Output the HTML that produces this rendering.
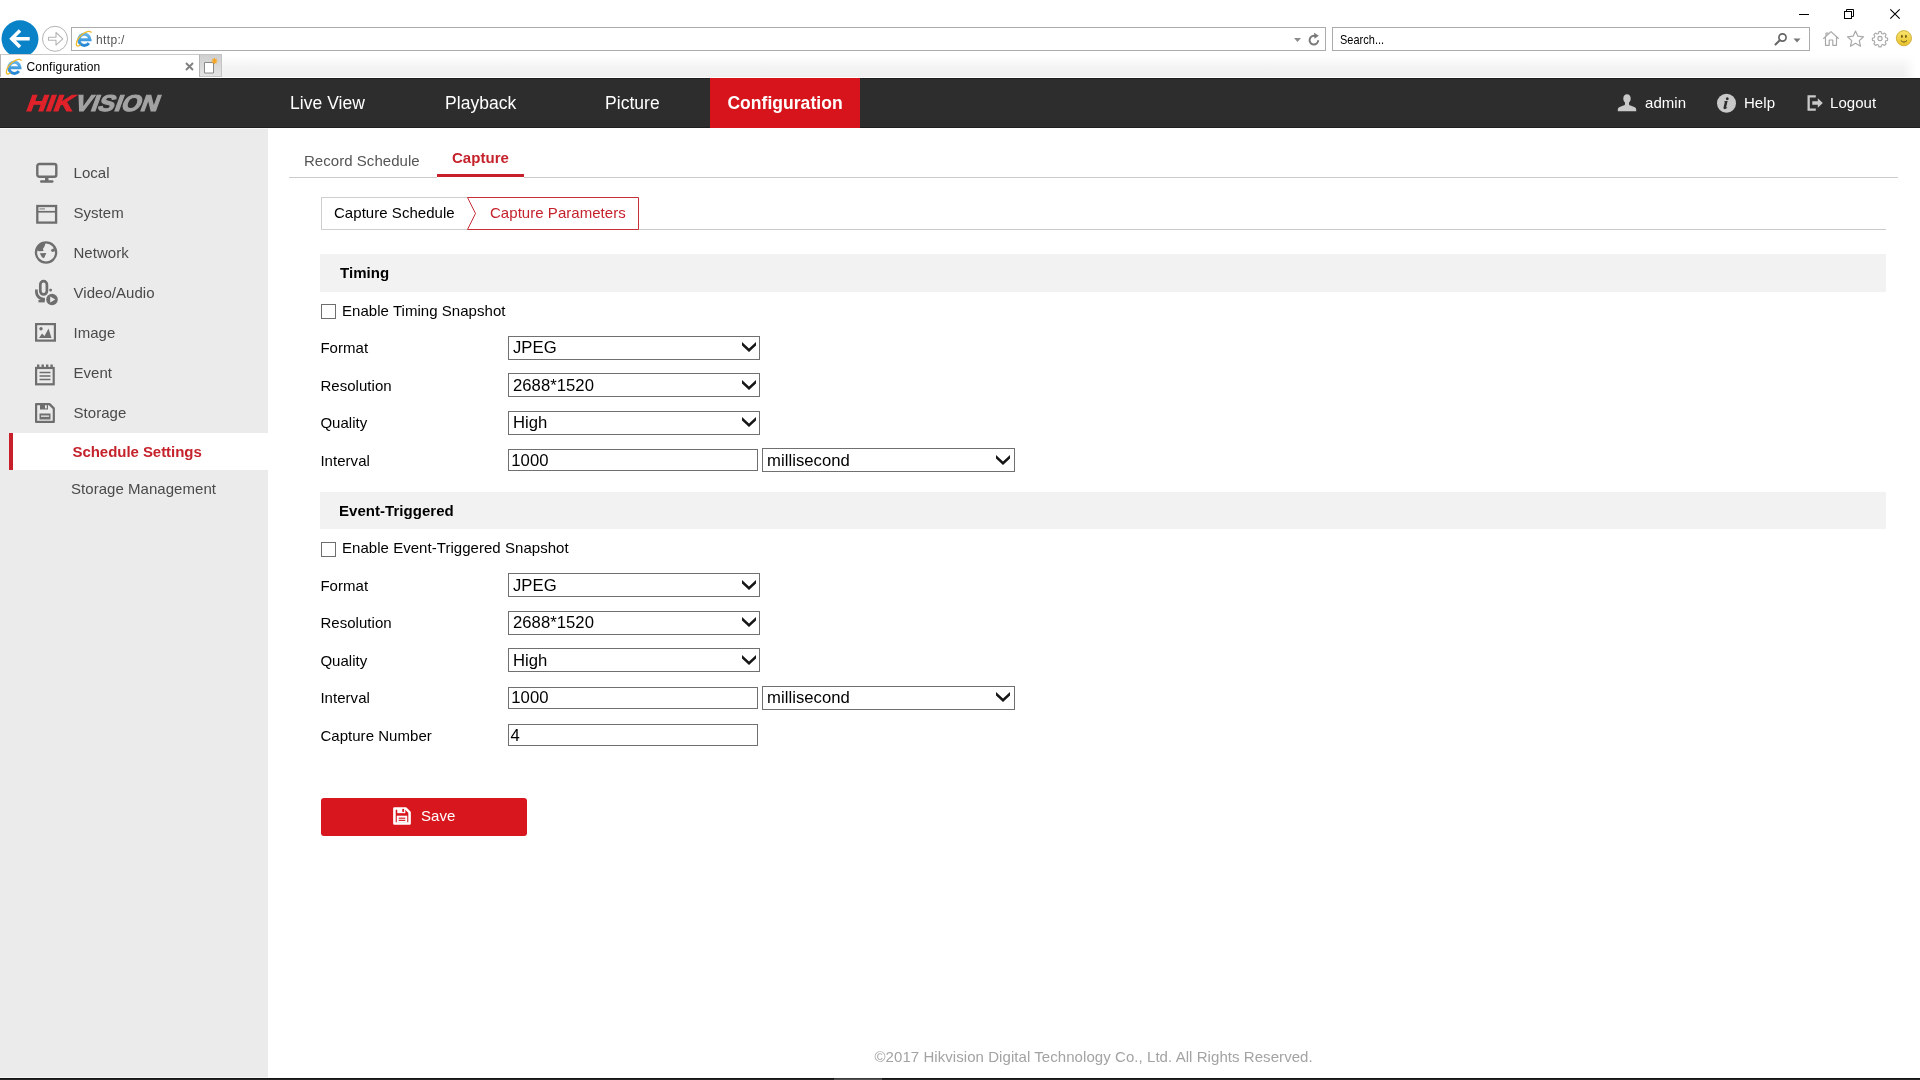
<!DOCTYPE html>
<html><head><meta charset="utf-8"><title>Configuration</title>
<style>
*{box-sizing:border-box;margin:0;padding:0}
html,body{width:1920px;height:1080px;overflow:hidden;background:#fff;font-family:"Liberation Sans",sans-serif;letter-spacing:.040px}
.abs{position:absolute}
#chrome{position:absolute;left:0;top:0;width:1920px;height:78px;background:#fff}
#tabrow{position:absolute;left:0;top:54px;width:1920px;height:23px;background:linear-gradient(to right,rgba(255,255,255,0) 0,rgba(255,255,255,0) 1903px,#fff 1916px),linear-gradient(#ffffff 0%,#fdfdfd 15%,#f4f4f4 55%,#efefef 100%)}
#tab{position:absolute;left:0;top:54px;width:200px;height:23px;background:#fff;border-left:1px solid #b5b5b5;border-right:1px solid #b5b5b5;border-top:1px solid #c9c9c9}
#newtab{position:absolute;left:200px;top:54px;width:22px;height:23px;background:linear-gradient(#cfcfcf,#e3e3e3);border:1px solid #c4c4c4;border-left:none}
.ui{font-family:"Liberation Sans",sans-serif;font-size:11.5px;color:#000;white-space:nowrap}
#addr{position:absolute;left:71px;top:27px;width:1255px;height:24px;border:1px solid #ababab;background:#fff}
#search{position:absolute;left:1332px;top:27px;width:478px;height:24px;border:1px solid #ababab;background:#fff}
#hdr{position:absolute;left:0;top:78px;width:1920px;height:50px;background:#2d2d2d;box-shadow:inset 0 1px 0 #1e1e1e,inset 0 -1px 0 #1f1f1f}
.nav{position:absolute;top:0;height:50px;line-height:50px;color:#fff;font-size:17.5px;white-space:nowrap}
#navcfg{position:absolute;left:710px;top:0;width:150px;height:50px;background:#d7141c;color:#fff;font-weight:bold;font-size:17.5px;line-height:50px;text-align:center}
.hr{position:absolute;color:#fff;font-size:15px;line-height:50px;top:0;white-space:nowrap}
#side{position:absolute;left:0;top:128px;width:268px;height:949px;background:#ebebeb;box-shadow:inset 0 1px 0 #f8f8f8}
.mi{position:absolute;left:73.500px;font-size:15px;color:#4a4a4a;white-space:nowrap;line-height:20px}
.ico{position:absolute}
#main{position:absolute;left:268px;top:128px;width:1652px;height:950px;background:#fff}
.lbl{position:absolute;left:320.400px;font-size:15px;color:#000;line-height:20px;white-space:nowrap}
.sel{position:absolute;height:24px;border:1px solid #707070;background:#fff;font-size:16.67px;line-height:21px;padding-left:4px;color:#000;white-space:nowrap}

.inp{position:absolute;width:250px;height:22px;border:1px solid #707070;background:#fff;font-size:16.67px;line-height:20px;padding-left:2.300px;color:#000}
.sec{position:absolute;left:320px;width:1566px;background:#f2f2f2;font-weight:bold;font-size:15px;color:#000;padding-left:20px}
.cb{position:absolute;left:321px;width:15px;height:15px;border:1px solid #6e6e6e;background:#fff}
</style></head><body>
<div id="root" style="position:absolute;left:0;top:0;width:1920px;height:1080px;will-change:transform">
<div id="chrome">
  <!-- window controls -->
  <svg class="abs" style="left:1790px;top:0" width="130" height="27" viewBox="0 0 130 27">
    <rect x="9" y="14" width="10" height="1" fill="#000"/>
    <g fill="none" stroke="#000" stroke-width="1">
      <rect x="54.5" y="11.5" width="7" height="7"/>
      <path d="M56.5 11.5V9.5H63.5V16.5H61.5"/>
    </g>
    <path d="M100.3 9.3L109.7 18.7M109.7 9.3L100.3 18.7" stroke="#000" stroke-width="1.1" fill="none"/>
  </svg>
  <div id="tabrow"></div>
  <!-- address bar -->
  <div id="addr">
    <svg class="abs" style="left:3px;top:2px" width="18" height="18" viewBox="0 0 18 18">
      <defs><linearGradient id="ieg" x1="0" y1="0" x2="0" y2="1"><stop offset="0" stop-color="#63b4ea"/><stop offset="1" stop-color="#2488d4"/></linearGradient></defs>
      <path d="M4.300 9.700H15A5.600 5.600 0 1 0 13.900 13.200" fill="none" stroke="url(#ieg)" stroke-width="3.100"/>
      <path d="M5.500 14.800C3.500 16.600 1.600 16.400 1.400 14.600C1 11 5 4.500 10.500 2.300C13.500 1.100 15.800 1.200 16.500 2.600" fill="none" stroke="#f0b929" stroke-width="1.300"/>
    </svg>
    <div class="ui abs" style="left:24px;top:5px;color:#555;font-size:12px;line-height:15px;letter-spacing:.350px">http:/</div>
    <svg class="abs" style="left:1221px;top:9px" width="10" height="6" viewBox="0 0 10 6"><path d="M1 1h7l-3.500 4z" fill="#8c8c8c"/></svg>
    <svg class="abs" style="left:1235px;top:4px" width="14" height="15" viewBox="0 0 14 15"><path d="M11.200 8.200A4.300 4.300 0 1 1 8.800 4.300" fill="none" stroke="#7a7a7a" stroke-width="2"/><path d="M7 .800l4.800 3-4.300 3z" fill="#7a7a7a"/></svg>
  </div>
  <div id="search">
    <div class="ui abs" style="left:7px;top:5px;color:#000;font-size:12.600px;line-height:15px;transform:scaleX(.870);transform-origin:0 0">Search...</div>
    <svg class="abs" style="left:440px;top:4px" width="16" height="15" viewBox="0 0 16 15"><circle cx="9.500" cy="5.500" r="3.600" fill="none" stroke="#666" stroke-width="1.700"/><path d="M6.800 8.200L2.500 12.500" stroke="#666" stroke-width="2" stroke-linecap="round"/></svg>
    <svg class="abs" style="left:460px;top:9.500px" width="9" height="6" viewBox="0 0 9 6"><path d="M0.500 .500h7l-3.500 4z" fill="#777"/></svg>
  </div>
  <!-- back / forward -->
  <svg class="abs" style="left:0;top:18px" width="70" height="38" viewBox="0 0 70 38">
    <circle cx="20" cy="20.800" r="18.500" fill="#0a82c8"/>
    <path d="M29.700 20.800H12.500M20 12.500L11.700 20.800l8.300 8.300" fill="none" stroke="#fff" stroke-width="3.500" stroke-linejoin="miter"/>
    <circle cx="55" cy="20.800" r="12.500" fill="#fff" stroke="#b4b4b4" stroke-width="1"/>
    <path d="M48.500 19.300h7.500v-4.800l6.800 6.300-6.800 6.300v-4.800h-7.500z" fill="#fff" stroke="#b4b4b4" stroke-width="1.100" stroke-linejoin="round"/>
  </svg>
  <!-- right icons -->
  <svg class="abs" style="left:1820px;top:28px" width="100" height="22" viewBox="0 0 100 22">
    <g fill="none" stroke="#a8a8a8" stroke-width="1.200" stroke-linejoin="round">
      <path d="M3.300 10.800L11 3.600l7.700 7.200M5.500 9.300v8h3.700v-5.300h3.600v5.300h3.700v-8M6 8.300V5h2v1.500"/>
      <path d="M35.500 3l2.400 5.200 5.600.6-4.200 3.800 1.200 5.600-5-2.900-5 2.900 1.200-5.600-4.200-3.800 5.600-.6z"/>
      <g transform="translate(60 10.500) scale(.920) translate(-60 -10.500)"><circle cx="60" cy="10.500" r="2.300"/>
      <path d="M58.800 3h2.400l.5 2 1.500.6 1.800-1 1.700 1.700-1 1.800.6 1.500 2 .5v2.400l-2 .5-.6 1.500 1 1.800-1.700 1.700-1.800-1-1.500.6-.5 2h-2.400l-.5-2-1.500-.6-1.800 1-1.700-1.700 1-1.800-.6-1.500-2-.5v-2.400l2-.5.6-1.500-1-1.800 1.700-1.700 1.800 1 1.500-.6z"/>
    </g></g>
    <defs><linearGradient id="smg" x1="0" y1="0" x2="0" y2="1"><stop offset="0" stop-color="#f8e46c"/><stop offset="1" stop-color="#e9c22e"/></linearGradient></defs>
    <circle cx="83.900" cy="10.200" r="7.600" fill="url(#smg)" stroke="#c9a52b" stroke-width=".800"/>
    <ellipse cx="81.900" cy="8.300" rx=".850" ry="1.600" fill="#6a5208"/><ellipse cx="85.900" cy="8.300" rx=".850" ry="1.600" fill="#6a5208"/>
    <path d="M80.800 12.500Q83.900 15.700 87 12.500" fill="none" stroke="#6a5208" stroke-width="1"/>
  </svg>
  <!-- tab -->
  <div id="tab">
    <svg class="abs" style="left:4px;top:3px" width="18" height="18" viewBox="0 0 18 18">
      <defs><linearGradient id="ieg" x1="0" y1="0" x2="0" y2="1"><stop offset="0" stop-color="#63b4ea"/><stop offset="1" stop-color="#2488d4"/></linearGradient></defs>
      <path d="M4.300 9.700H15A5.600 5.600 0 1 0 13.900 13.200" fill="none" stroke="url(#ieg)" stroke-width="3.100"/>
      <path d="M5.500 14.800C3.500 16.600 1.600 16.400 1.400 14.600C1 11 5 4.500 10.500 2.300C13.500 1.100 15.800 1.200 16.500 2.600" fill="none" stroke="#f0b929" stroke-width="1.300"/>
    </svg>
    <div class="ui abs" style="left:25.500px;top:5px;font-size:12px;line-height:15px;letter-spacing:.200px">Configuration</div>
    <svg class="abs" style="left:183.500px;top:6.500px" width="9" height="9" viewBox="0 0 9 9"><path d="M1 1l7 7M8 1L1 8" stroke="#808080" stroke-width="1.900"/></svg>
  </div>
  <div id="newtab">
    <svg class="abs" style="left:3px;top:2px" width="16" height="18" viewBox="0 0 16 18"><path d="M1.500 5.500h9v10.500h-9z" fill="#fff" stroke="#8a8a8a" stroke-width="1"/><path d="M11.500 1v6M8.500 4h6M9.400 1.900l4.200 4.200M13.600 1.900L9.400 6.100" stroke="#f5a623" stroke-width="1.100"/></svg>
  </div>
</div>
<div id="hdr">
  <svg class="abs" style="left:20px;top:10px" width="150" height="30" viewBox="0 0 150 30">
    <g transform="translate(4.200,23.300) skewX(-20)" style="font:bold 23px 'Liberation Sans',sans-serif" stroke-width="1.100" stroke-linejoin="miter">
      <text x="1" y="0" fill="#e0222a" stroke="#e0222a" textLength="46.500" lengthAdjust="spacingAndGlyphs">HIK</text>
      <text x="49" y="0" fill="#a3a3a3" stroke="#a3a3a3" textLength="84" lengthAdjust="spacingAndGlyphs">VISION</text>
    </g>
  </svg>
  <div class="nav" style="left:290px">Live View</div>
  <div class="nav" style="left:445px">Playback</div>
  <div class="nav" style="left:605px">Picture</div>
  <div id="navcfg">Configuration</div>
  <!-- user -->
  <svg class="abs" style="left:1616px;top:15px" width="22" height="20" viewBox="0 0 22 20">
    <path d="M11 1.200c2.300 0 3.700 1.700 3.700 4.300 0 1.800-.7 3.300-1.700 4.100v1.300c0 .8.500 1.300 1.600 1.700l3.700 1.300c1.300.5 1.900 1.300 1.900 2.500v1.800H1.800v-1.800c0-1.200.6-2 1.900-2.500l3.700-1.300c1.100-.4 1.600-.9 1.600-1.700V9.600c-1-.8-1.700-2.300-1.700-4.100 0-2.600 1.400-4.300 3.700-4.300z" fill="#c9c9c9"/>
  </svg>
  <div class="hr" style="left:1645px">admin</div>
  <svg class="abs" style="left:1716px;top:15px" width="21" height="21" viewBox="0 0 21 21">
    <circle cx="10.500" cy="10.300" r="9.500" fill="#c9c9c9"/>
    <path d="M11.300 4.300a1.400 1.400 0 1 1-.01 0zM8.300 8.200l3.400-.5-1.500 6.300c-.1.600.2.700.9.300l.2.500c-1.200 1.100-2.300 1.500-3 1.300-.7-.2-.9-.9-.7-1.800l1.100-4.800c.1-.5 0-.7-.6-.8z" fill="#2d2d2d"/>
  </svg>
  <div class="hr" style="left:1744px">Help</div>
  <svg class="abs" style="left:1806px;top:16px" width="18" height="18" viewBox="0 0 18 18">
    <path d="M1.500 1.200h8.300v2.300H3.800v11h6v2.300H1.500z" fill="#c9c9c9"/>
    <path d="M6.300 7.300h5.500V4.200l5 4.800-5 4.800v-3.100H6.300z" fill="#c9c9c9"/>
  </svg>
  <div class="hr" style="left:1830px">Logout</div>
</div>
<div id="side">
  <!-- Local: monitor (y offset: page y - 128) -->
  <svg class="ico" style="left:35px;top:34px" width="24" height="22" viewBox="0 0 24 22">
    <rect x="2.300" y="2" width="19" height="12.800" rx="2" fill="none" stroke="#6e6e6e" stroke-width="2.400"/>
    <rect x="10" y="15" width="3.500" height="4" fill="#6e6e6e"/>
    <rect x="5" y="18.300" width="13.500" height="2.500" rx="1.200" fill="#6e6e6e"/>
  </svg>
  <div class="mi" style="top:35px">Local</div>
  <!-- System: window -->
  <svg class="ico" style="left:35px;top:76px" width="24" height="20" viewBox="0 0 24 20">
    <rect x="2.300" y="2" width="18.800" height="16.600" fill="none" stroke="#6e6e6e" stroke-width="2.300"/>
    <rect x="2.300" y="6.900" width="18.800" height="1.700" fill="#6e6e6e"/>
    <rect x="4.500" y="4.300" width="5.500" height="1.200" fill="#8a8a8a"/>
  </svg>
  <div class="mi" style="top:75px">System</div>
  <!-- Network: globe -->
  <svg class="ico" style="left:34px;top:113px" width="24" height="24" viewBox="0 0 24 24">
    <circle cx="12.050" cy="11.500" r="10.100" fill="#ebebeb" stroke="#6e6e6e" stroke-width="2.300"/>
    <path d="M3 7.900L4.400 3.900L7.900 1.600L11.600 1.500L10.700 5.100L8.900 7.900L9.600 10L5.800 10.300L3.700 10z" fill="#6e6e6e"/>
    <path d="M5.800 12.300L12.300 12.100L10 17.200L7.900 16.300z" fill="#6e6e6e"/>
    <path d="M16.700 8.900L20.300 7L21 10.300L18 11.100z" fill="#6e6e6e"/>
  </svg>
  <div class="mi" style="top:115px">Network</div>
  <!-- Video/Audio: mic + play -->
  <svg class="ico" style="left:34px;top:151px" width="26" height="28" viewBox="0 0 26 28">
    <rect x="6.300" y="2.200" width="6.600" height="13.200" rx="3.300" fill="none" stroke="#6e6e6e" stroke-width="2.700"/>
    <path d="M2.400 10.500v2.300a7.300 7.300 0 0 0 8.500 7.200" fill="none" stroke="#6e6e6e" stroke-width="2.700"/>
    <rect x="4.500" y="20.800" width="6.200" height="2.600" fill="#6e6e6e"/>
    <rect x="8.500" y="19.500" width="2" height="2.500" fill="#6e6e6e"/>
    <rect x="15.300" y="9.800" width="2.600" height="2.600" rx=".800" fill="#6e6e6e"/>
    <circle cx="18" cy="20.500" r="5.800" fill="#6e6e6e"/>
    <path d="M16.200 17.600l5 2.900-5 2.900z" fill="#ebebeb"/>
  </svg>
  <div class="mi" style="top:155px">Video/Audio</div>
  <!-- Image -->
  <svg class="ico" style="left:34px;top:194px" width="24" height="22" viewBox="0 0 24 22">
    <rect x="2.100" y="2.100" width="18.800" height="16.500" fill="none" stroke="#6e6e6e" stroke-width="2.200"/>
    <circle cx="7" cy="6.800" r="1.700" fill="#6e6e6e"/>
    <path d="M5 16l3-4.500 2.500 2.500 4-7.500 3 9.500z" fill="#6e6e6e"/>
  </svg>
  <div class="mi" style="top:195px">Image</div>
  <!-- Event -->
  <svg class="ico" style="left:34px;top:234.700px" width="24" height="24" viewBox="0 0 24 24">
    <rect x="2.100" y="5" width="17.600" height="16.300" fill="none" stroke="#6e6e6e" stroke-width="2.200"/>
    <path d="M3 1.500h2.400v4H3zM7.500 1.500h2.400v4H7.500zM12 1.500h2.400v4H12zM16.400 1.500h2.400v4h-2.400z" fill="#6e6e6e"/>
    <path d="M5.500 9.500h11M5.500 13h11M5.500 16.500h11" stroke="#6e6e6e" stroke-width="1.500"/>
  </svg>
  <div class="mi" style="top:235px">Event</div>
  <!-- Storage: floppy -->
  <svg class="ico" style="left:34px;top:274px" width="24" height="22" viewBox="0 0 24 22">
    <path d="M2.100 2.100h13.400l4.300 4.300v13.500H2.100z" fill="none" stroke="#6e6e6e" stroke-width="2.200" stroke-linejoin="round"/>
    <path d="M6 2.500h8v5H6z" fill="#6e6e6e"/><rect x="11" y="3.200" width="1.800" height="3.200" fill="#ebebeb"/>
    <rect x="5.500" y="11.500" width="11" height="6" fill="#6e6e6e"/>
    <rect x="7" y="13.500" width="8" height="1.300" fill="#ebebeb"/>
  </svg>
  <div class="mi" style="top:275px">Storage</div>
  <!-- submenu -->
  <div class="abs" style="left:9px;top:305px;width:259px;height:37px;background:#fff;border-left:4px solid #c8202b"></div>
  <div class="mi" style="left:72.500px;top:314px;color:#c5222c;font-weight:bold;letter-spacing:-.050px">Schedule Settings</div>
  <div class="mi" style="left:71px;top:351px">Storage Management</div>
</div>
<div id="main"></div>
<div id="main2" class="abs" style="left:0;top:0;width:1920px;height:1080px">
  <!-- top tabs -->
  <div class="abs" style="left:289px;top:177px;width:1609px;height:1px;background:#cbcbcb"></div>
  <div class="abs" style="left:437px;top:177px;width:87px;height:1px;background:#fff"></div>
  <div class="abs" style="left:304px;top:151px;font-size:15px;line-height:20px;color:#555;white-space:nowrap">Record Schedule</div>
  <div class="abs" style="left:452px;top:148px;font-size:15px;line-height:20px;color:#c5222c;font-weight:bold;white-space:nowrap">Capture</div>
  <div class="abs" style="left:437px;top:174px;width:87px;height:3px;background:#c8202b"></div>
  <!-- sub tabs -->
  <div class="abs" style="left:321px;top:229px;width:1565px;height:1px;background:#cbcbcb"></div>
  <div class="abs" style="left:321px;top:197px;width:150px;height:33px;border:1px solid #cfcfcf;border-right:none;background:#fff"></div>
  <div class="abs" style="left:334px;top:203px;font-size:15px;line-height:20px;color:#000;white-space:nowrap">Capture Schedule</div>
  <svg class="abs" style="left:466px;top:197px" width="174" height="33" viewBox="0 0 174 33">
    <path d="M1.500 .500H172.500V32.500H1.500L9.500 16.500z" fill="#fff" stroke="#c42f38" stroke-width="1"/>
  </svg>
  <div class="abs" style="left:490px;top:203px;font-size:15px;line-height:20px;color:#c5222c;white-space:nowrap">Capture Parameters</div>
  <!-- section 1 -->
  <div class="sec" style="top:254px;height:38px;line-height:38px">Timing</div>
  <div class="cb" style="top:304px"></div>
  <div class="abs" style="left:342px;top:301px;font-size:15px;line-height:20px;color:#000;white-space:nowrap">Enable Timing Snapshot</div>
<div class="lbl" style="top:338px">Format</div><div class="sel" style="left:508px;top:336px;width:252px"><span style="position:relative;top:0px">JPEG</span><svg style="position:absolute;left:232.8px;top:4.8px" width="15" height="11" viewBox="0 0 15 11"><path d="M0 0L7 6.500L14 0V3.500L7 10.100L0 3.500z" fill="#161616"/></svg></div>
<div class="lbl" style="top:376px">Resolution</div><div class="sel" style="left:508px;top:373px;width:252px"><span style="position:relative;top:1px">2688*1520</span><svg style="position:absolute;left:232.8px;top:5.8px" width="15" height="11" viewBox="0 0 15 11"><path d="M0 0L7 6.500L14 0V3.500L7 10.100L0 3.500z" fill="#161616"/></svg></div>
<div class="lbl" style="top:413px">Quality</div><div class="sel" style="left:508px;top:411px;width:252px"><span style="position:relative;top:0px">High</span><svg style="position:absolute;left:232.8px;top:4.8px" width="15" height="11" viewBox="0 0 15 11"><path d="M0 0L7 6.500L14 0V3.500L7 10.100L0 3.500z" fill="#161616"/></svg></div>
<div class="lbl" style="top:451px">Interval</div><div class="inp" style="left:508px;top:449px"><span style="position:relative;top:1px">1000</span></div><div class="sel" style="left:762px;top:448px;width:253px"><span style="position:relative;top:1px">millisecond</span><svg style="position:absolute;left:232.8px;top:5.8px" width="15" height="11" viewBox="0 0 15 11"><path d="M0 0L7 6.500L14 0V3.500L7 10.100L0 3.500z" fill="#161616"/></svg></div>
  <div class="sec" style="top:492px;height:37px;line-height:37px;padding-left:19px">Event-Triggered</div>
  <div class="cb" style="top:542px"></div>
  <div class="abs" style="left:342px;top:538px;font-size:15px;line-height:20px;color:#000;white-space:nowrap">Enable Event-Triggered Snapshot</div>
<div class="lbl" style="top:576px">Format</div><div class="sel" style="left:508px;top:573px;width:252px"><span style="position:relative;top:1px">JPEG</span><svg style="position:absolute;left:232.8px;top:5.8px" width="15" height="11" viewBox="0 0 15 11"><path d="M0 0L7 6.500L14 0V3.500L7 10.100L0 3.500z" fill="#161616"/></svg></div>
<div class="lbl" style="top:613px">Resolution</div><div class="sel" style="left:508px;top:611px;width:252px"><span style="position:relative;top:0px">2688*1520</span><svg style="position:absolute;left:232.8px;top:4.8px" width="15" height="11" viewBox="0 0 15 11"><path d="M0 0L7 6.500L14 0V3.500L7 10.100L0 3.500z" fill="#161616"/></svg></div>
<div class="lbl" style="top:651px">Quality</div><div class="sel" style="left:508px;top:648px;width:252px"><span style="position:relative;top:1px">High</span><svg style="position:absolute;left:232.8px;top:5.8px" width="15" height="11" viewBox="0 0 15 11"><path d="M0 0L7 6.500L14 0V3.500L7 10.100L0 3.500z" fill="#161616"/></svg></div>
<div class="lbl" style="top:688px">Interval</div><div class="inp" style="left:508px;top:687px"><span style="position:relative;top:0px">1000</span></div><div class="sel" style="left:762px;top:686px;width:253px"><span style="position:relative;top:0px">millisecond</span><svg style="position:absolute;left:232.8px;top:4.8px" width="15" height="11" viewBox="0 0 15 11"><path d="M0 0L7 6.500L14 0V3.500L7 10.100L0 3.500z" fill="#161616"/></svg></div>
<div class="lbl" style="top:726px">Capture Number</div><div class="inp" style="left:508px;top:724px"><span style="position:relative;top:1px"><span style="margin-left:-.800px">4</span></span></div>
  <div class="abs" style="left:321px;top:798px;width:206px;height:38px;background:#d7161e;border-radius:3px"></div>
  <svg class="abs" style="left:392.500px;top:807px" width="18" height="18" viewBox="0 0 19 19">
    <path d="M1.500 1.500h11.800l4.200 4.200v11.800H1.500z" fill="none" stroke="#fff" stroke-width="2.700" stroke-linejoin="round"/>
    <path d="M4.500 1.500h8.500v5H4.500z" fill="#fff"/><rect x="9.800" y="2" width="1.900" height="3.200" fill="#d7161e"/>
    <rect x="4" y="9.200" width="11" height="7.300" fill="#fff"/>
    <rect x="6" y="11.200" width="7" height="1.200" fill="#d7161e"/><rect x="6" y="13.500" width="7" height="1.200" fill="#d7161e"/>
  </svg>
  <div class="abs" style="left:421px;top:806px;font-size:15px;line-height:20px;color:#fff;white-space:nowrap">Save</div>
  <!-- footer -->
  <div class="abs" style="left:874.500px;top:1047px;font-size:15px;line-height:20px;color:#a3a3a3;white-space:nowrap;letter-spacing:.060px">©2017 Hikvision Digital Technology Co., Ltd. All Rights Reserved.</div>
  <div class="abs" style="left:0;top:1077px;width:268px;height:1px;background:#f6f6f6"></div>
  <div class="abs" style="left:0;top:1078px;width:1920px;height:2px;background:linear-gradient(#151515 0,#151515 50%,#242424 50%,#242424 100%)"></div>
  <div class="abs" style="left:834px;top:1078px;width:48px;height:2px;background:linear-gradient(#3c3c3c 0,#3c3c3c 50%,#525252 50%,#525252 100%)"></div>
</div>
</div>
</body></html>
